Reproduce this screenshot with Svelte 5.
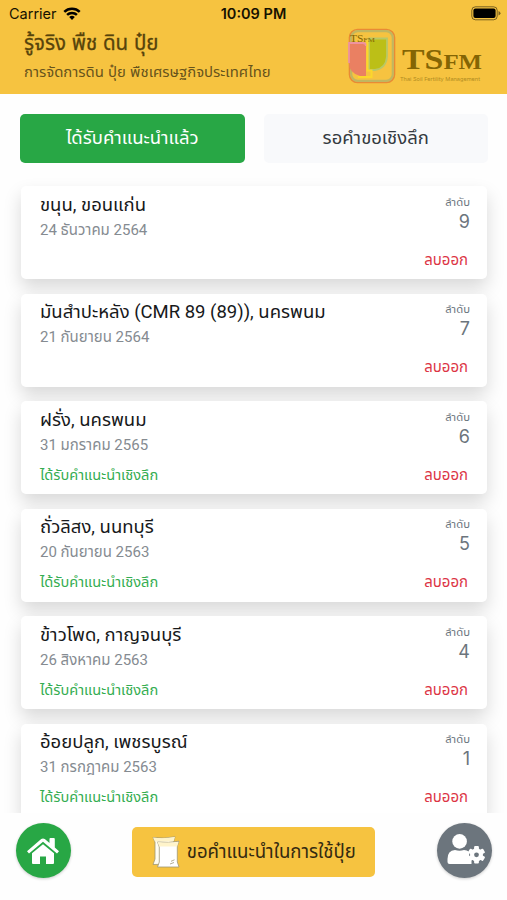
<script lang="ts">
    interface Advice {
        order: number;
        title: string;
        date: string;
        detailed: boolean;
    }

    const items: Advice[] = [
        { order: 9, title: "ขนุน, ขอนแก่น", date: "24 ธันวาคม 2564", detailed: false },
        { order: 7, title: "มันสำปะหลัง (CMR 89 (89)), นครพนม", date: "21 กันยายน 2564", detailed: false },
        { order: 6, title: "ฝรั่ง, นครพนม", date: "31 มกราคม 2565", detailed: true },
        { order: 5, title: "ถั่วลิสง, นนทบุรี", date: "20 กันยายน 2563", detailed: true },
        { order: 4, title: "ข้าวโพด, กาญจนบุรี", date: "26 สิงหาคม 2563", detailed: true },
        { order: 1, title: "อ้อยปลูก, เพชรบูรณ์", date: "31 กรกฎาคม 2563", detailed: true },
    ];

    let tab = $state("received");
</script>

<div class="screen">
    <header class="header">
        <div class="statusbar">
            <span class="statusbar__carrier">
                Carrier
                <svg width="18" height="13" viewBox="0 0 19 14" fill="none" stroke="#000" stroke-width="2.7">
                    <path d="M1.2 5.2a11.9 11.9 0 0 1 16.6 0" />
                    <path d="M4.2 8.5a7.6 7.6 0 0 1 10.6 0" />
                    <path d="M9.5 14 6.5 10.8a4.3 4.3 0 0 1 6 0Z" fill="#000" stroke="none" />
                </svg>
            </span>
            <span class="statusbar__time">10:09 PM</span>
            <svg class="statusbar__battery" width="30" height="15" viewBox="0 0 30 15">
                <rect x="0.8" y="0.8" width="25.4" height="13" rx="3.6" fill="none" stroke="#000" stroke-opacity="0.5" />
                <rect x="2.4" y="2.5" width="22.2" height="9.6" rx="2" />
                <path d="M27.5 5v4.6q2-.8 2-2.3T27.5 5Z" opacity="0.5" />
            </svg>
        </div>
        <div class="header__body">
            <div class="header__titles">
                <h1>รู้จริง พืช ดิน ปุ๋ย</h1>
                <p>การจัดการดิน ปุ๋ย พืชเศรษฐกิจประเทศไทย</p>
            </div>
            <svg class="logo" width="138" height="58" viewBox="0 0 138 58">
                <rect x="1.5" y="2.5" width="45" height="53" rx="8" fill="none" stroke="#e98a35" stroke-width="1.6" />
                <rect x="3.2" y="4.2" width="41.6" height="49.6" rx="6.5" fill="none" stroke="#c1b660" stroke-width="2.2" />
                <path d="M21 11.5h18v18q-1 12-12 13.5h-6Z" fill="#bcbf17" stroke="#b9c866" stroke-width="1.8" />
                <path d="M1 16h14q3 0 3 3v30h-6Q1 46 1 36Z" fill="#ea8062" />
                <path d="M1 36V16h14q3 0 3 3" fill="none" stroke="#ee93a0" stroke-width="1.8" />
                <path d="M19.5 13v30.5h4V50H10" fill="none" stroke="#fbd72b" stroke-width="2" />
                <text class="logo__mark" x="2" y="14.5" textLength="25" lengthAdjust="spacingAndGlyphs">TS<tspan font-size="7">FM</tspan></text>
                <text class="logo__name" x="54" y="41.5" textLength="80" lengthAdjust="spacingAndGlyphs">TS<tspan font-size="22">FM</tspan></text>
                <text class="logo__sub" x="52" y="53.5" textLength="80" lengthAdjust="spacingAndGlyphs">Thai Soil Fertility Management</text>
            </svg>
        </div>
    </header>

    <nav class="tabs">
        <button class="tab" class:tab--active={tab === "received"} onclick={() => (tab = "received")}>
            ได้รับคำแนะนำแล้ว
        </button>
        <button class="tab" class:tab--active={tab === "waiting"} onclick={() => (tab = "waiting")}>
            รอคำขอเชิงลึก
        </button>
    </nav>

    <main class="list">
        {#each items as item (item.order)}
            <article class="card">
                <div class="card__main">
                    <h2>{item.title}</h2>
                    <p class="card__date">{item.date}</p>
                    {#if item.detailed}
                        <p class="card__detailed">ได้รับคำแนะนำเชิงลึก</p>
                    {/if}
                </div>
                <div class="card__side">
                    <span class="card__label">ลำดับ</span>
                    <span class="card__order">{item.order}</span>
                    <button class="card__delete">ลบออก</button>
                </div>
            </article>
        {/each}
    </main>

    <footer class="footer">
        <button class="round round--home" aria-label="หน้าแรก">
            <svg width="34" height="28" viewBox="0 0 34 28" fill="#fff">
                <path d="M17 7.2 6 16.3V26q0 1 1 1h7v-7.5h6V27h7q1 0 1-1v-9.7Z" />
                <path d="M1 14.2 15.2 2.1Q17 .8 18.8 2.1L23.5 6V2q0-.9.9-.9h3.5q.9 0 .9.9v8.5l4.2 3.7-2 2.3L17 4.8 3 16.5Z" />
            </svg>
        </button>
        <button class="request">
            <svg width="28" height="32" viewBox="0 0 28 32" stroke="#a09775" stroke-width="0.8">
                <path d="M1 1.5q11 1.5 22-.7L21.5 6v18l1.5 4-22 .5L3 23V6Z" fill="#fffdf1" />
                <path d="M3 5.5h18.5L23 1Q11 3 1 1.5Z" fill="#fff4cb" stroke="none" />
                <path d="M5.5 6q11 1.3 21.5-.8L25.3 10v16l1.7 5H5.5L7.3 26V11Z" fill="#fff" />
                <path d="M7.3 10.5h17.8L26.5 6q-10 1.2-21 0Z" fill="#fff4cb" stroke="none" />
                <path d="m18 28 4-1.5m-3-1.2 3.5-1.5" />
            </svg>
            <span>ขอคำแนะนำในการใช้ปุ๋ย</span>
        </button>
        <button class="round round--user" aria-label="ตั้งค่าผู้ใช้">
            <svg width="40" height="34" viewBox="0 0 40 34">
                <circle cx="14.6" cy="7.4" r="7.3" fill="#fff" />
                <path d="M2.5 28v-3q0-8.5 7.5-9 4.5 1.6 9 0 6 .5 7.500 6v8H4.5q-2 0-2-2Z" fill="#fff" />
                <g transform="translate(31.5 20.8)">
                    <circle r="7.4" fill="#6c757d" />
                    <g fill="#fff">
                        <circle r="6.5" />
                        {#each [0, 60, 120] as angle}
                            <rect x="-2.4" y="-8.7" width="4.8" height="17.4" rx="1" transform="rotate({angle})" />
                        {/each}
                    </g>
                    <circle r="2.4" fill="#6c757d" />
                </g>
            </svg>
        </button>
    </footer>
</div>

<style>
    :global(body) {
        background: #fff;
    }

    .screen {
        display: flex;
        flex-direction: column;
        width: 507px;
        height: 900px;
        overflow: hidden;
        background: #fefefe;
        font-family: Inter, "Noto Sans Thai", "Noto Sans", sans-serif;
        color: #212529;
    }

    h1,
    h2,
    p {
        margin: 0;
        font-weight: 400;
        white-space: nowrap;
    }

    button {
        border: 0;
        padding: 0;
        font-family: inherit;
        background: none;
        white-space: nowrap;
    }

    .header {
        height: 94px;
        flex: none;
        background: #f6c340;
    }

    .statusbar {
        display: grid;
        grid-template-columns: 1fr auto 1fr;
        align-items: center;
        height: 27px;
        padding: 0 6px 0 9px;
        color: #161200;
        font-size: 14.5px;
    }

    .statusbar__carrier {
        display: flex;
        align-items: center;
        gap: 6px;
    }

    .statusbar__time {
        margin-right: 3px;
        font-weight: 600;
    }

    .statusbar__battery {
        justify-self: end;
    }

    .header__body {
        display: flex;
        justify-content: space-between;
        padding: 0 21px 0 24px;
    }

    .header__titles h1 {
        height: 31px;
        line-height: 31px;
        font-size: 20.5px;
        color: #57430b;
        -webkit-text-stroke: 0.3px;
    }

    .header__titles p {
        height: 28px;
        line-height: 28px;
        font-size: 14.9px;
        color: #66531c;
    }

    .logo__mark,
    .logo__name {
        font-family: "Liberation Serif", serif;
        font-weight: 700;
        fill: #846504;
    }

    .logo__mark {
        font-size: 10px;
        font-weight: 400;
    }

    .logo__name {
        font-size: 30px;
    }

    .logo__sub {
        font-size: 5px;
        fill: #b18b21;
    }

    .tabs {
        display: grid;
        grid-template-columns: 1fr 1fr;
        gap: 19px;
        flex: none;
        padding: 19.5px 19px 0 20px;
    }

    .tab {
        height: 49px;
        border-radius: 5px;
        background: #f8f9fb;
        color: #343a40;
        font-size: 18.5px;
    }

    .tab--active {
        background: #28a745;
        color: #fff;
    }

    .list {
        display: flex;
        flex-direction: column;
        gap: 14.5px;
        flex: 1;
        min-height: 0;
        padding: 23.5px 20px 0 21px;
        overflow: hidden;
    }

    .card {
        display: flex;
        justify-content: space-between;
        flex: none;
        box-sizing: border-box;
        height: 93px;
        padding: 4.5px 17px 0 19px;
        border-radius: 5px;
        background: #fff;
        box-shadow: 0 9px 18px rgba(0, 0, 0, 0.15);
        font-family: Roboto, "Noto Sans Thai", "Noto Sans", sans-serif;
    }

    .card__main h2 {
        height: 28px;
        line-height: 28px;
        font-size: 18.5px;
        color: #17191b;
    }

    .card__date {
        height: 22px;
        line-height: 22px;
        font-size: 15px;
        color: #858b91;
    }

    .card__detailed {
        height: 28px;
        margin-top: 5px;
        line-height: 28px;
        font-size: 14.6px;
        color: #35ad51;
    }

    .card__side {
        display: flex;
        flex-direction: column;
        align-items: flex-end;
        color: #6c757d;
    }

    .card__label {
        height: 20px;
        margin-top: 2px;
        line-height: 20px;
        font-size: 11.3px;
    }

    .card__order {
        height: 18px;
        line-height: 18px;
        font-family: Inter, sans-serif;
        font-size: 18px;
    }

    .card__delete {
        height: 28px;
        margin: 15px 2px 0 0;
        line-height: 28px;
        font-size: 15px;
        color: #dc3545;
    }

    .footer {
        display: flex;
        align-items: center;
        justify-content: space-between;
        flex: none;
        box-sizing: border-box;
        height: 87px;
        padding: 0 15px 12px 15.5px;
        background: #fefefe;
    }

    .round {
        display: grid;
        place-items: center;
        width: 55px;
        height: 55px;
        border-radius: 50%;
        box-shadow: 0 1px 3px rgba(0, 0, 0, 0.2);
    }

    .round--home {
        background: #28a745;
    }

    .round--user {
        background: #6c757d;
    }

    .request {
        display: flex;
        align-items: center;
        justify-content: center;
        gap: 7px;
        width: 243px;
        height: 50px;
        margin-top: 2px;
        border-radius: 5px;
        background: #f6c340;
        color: #342a11;
        font-size: 18.6px;
    }
</style>
